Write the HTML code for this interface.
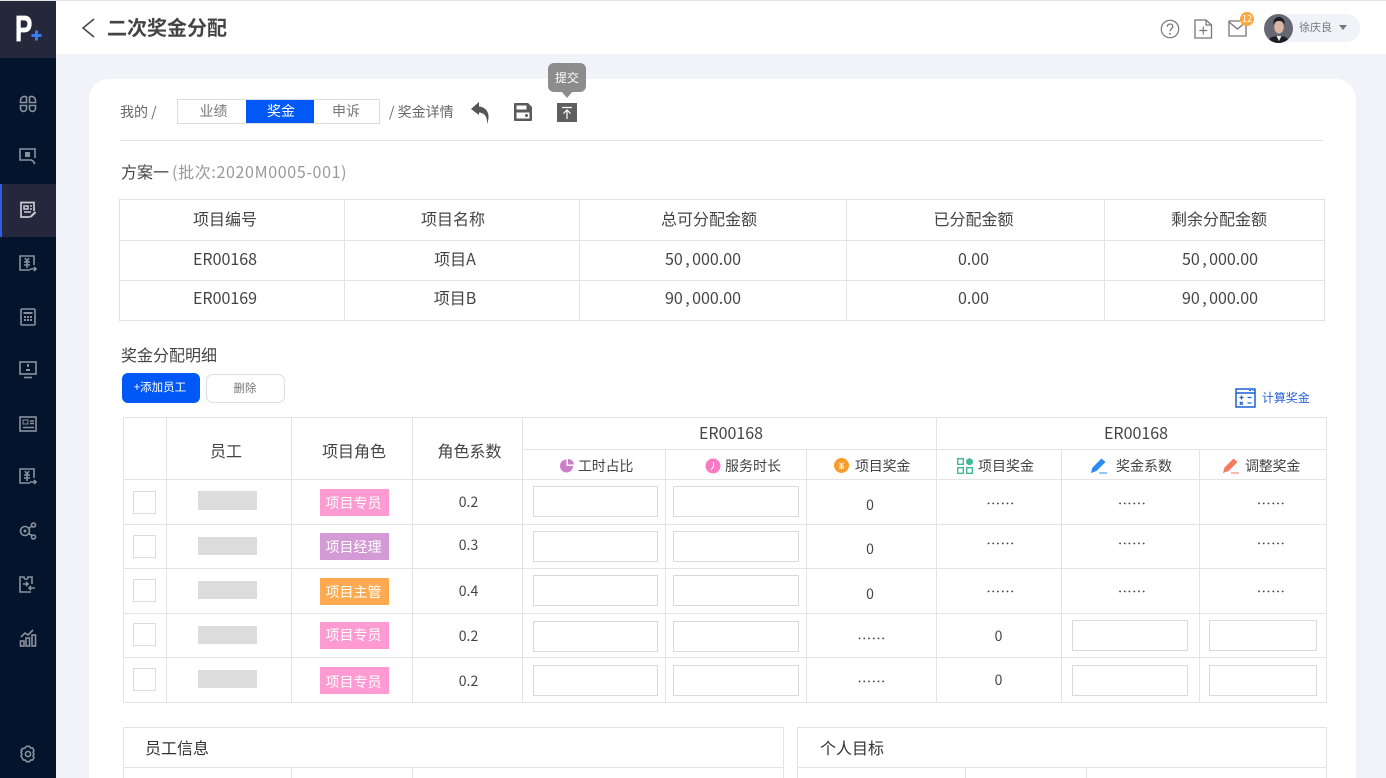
<!DOCTYPE html>
<html lang="zh"><head><meta charset="utf-8"><title>二次奖金分配</title>
<style>
html,body{margin:0;padding:0;width:1386px;height:778px;overflow:hidden;background:#f1f3f9}
body{position:relative;font-family:"Noto Sans CJK SC","Liberation Sans",sans-serif;color:#444}
div,svg,span.a{position:absolute}
.t{text-align:center;white-space:nowrap;font-size:16px;line-height:24px;color:#444}
.l{text-align:left}
.h{background:#e4e4e4;height:1px}
.v{background:#e4e4e4;width:1px}
.i{background:#fff;border:1px solid #d9d9d9;box-sizing:border-box}
.c{background:#fff;border:1px solid #dcdcdc;box-sizing:border-box;width:23px;height:23px;left:133px}
.g{background:#dcdcdc;left:198px;width:59px;height:19px}
.tag{left:320px;width:69px;height:27px;line-height:27px;font-size:14px;color:#fff;text-align:center;text-indent:-2px;overflow:hidden}
.n{stroke:#8b919c;fill:none;stroke-width:1.6}
.d{font-size:14px;letter-spacing:0;line-height:20px;color:#444}
.o{letter-spacing:.3px}
.s{font-size:14px;line-height:20px}
.k{margin:0 2.5px}
</style></head><body>

<!-- sidebar -->
<div style="left:0;top:0;width:56px;height:778px;background:#03142c"></div>
<div style="left:0;top:0;width:56px;height:58px;background:#25283a"></div>
<div style="left:0;top:184px;width:56px;height:53px;background:#25283c"></div>
<div style="left:0;top:184px;width:2px;height:53px;background:#2f5fe0"></div>
<div style="left:15px;top:9px;font:700 36px/40px 'Liberation Sans',sans-serif;color:#fff;-webkit-text-stroke:.7px #fff;transform:scaleX(.72);transform-origin:0 0">P</div>
<svg style="left:30px;top:29px" width="13" height="13" viewBox="0 0 13 13"><path d="M6.500 1.500v10M1.500 6.500h10" stroke="#3a7bf0" stroke-width="3"/></svg>

<svg style="left:19px;top:95px" width="18" height="18" viewBox="0 0 18 18"><g class="n"><path d="M1.500 7.500v-2a4 4 0 0 1 6-3.500v5.500z"/><path d="M16.500 7.500v-2a4 4 0 0 0-6-3.500v5.500z"/><path d="M1.500 10.500v3a3 3 0 0 0 6 0v-3z"/><path d="M16.500 10.500v3a3 3 0 0 1-6 0v-3z"/></g></svg>
<svg style="left:19px;top:148px" width="18" height="18" viewBox="0 0 18 18"><path class="n" d="M13 12H1V1h15v9"/><rect x="6" y="4" width="5" height="5" fill="#8b919c"/><path class="n" d="M12 12l2 1 2 3"/></svg>
<svg style="left:19px;top:201px" width="18" height="18" viewBox="0 0 18 18"><path d="M11 16H2V1.500h13V10" stroke="#c9ccd2" stroke-width="1.700" fill="none"/><path d="M5 5h4v3H5zM11 5h2M5 11h7M11 8h2" stroke="#c9ccd2" stroke-width="1.500" fill="none"/><path d="M11.500 16l5-5" stroke="#c9ccd2" stroke-width="2"/></svg>
<svg style="left:19px;top:255px" width="18" height="18" viewBox="0 0 18 18"><path class="n" d="M11 15H1V1h14v9"/><path class="n" d="M6 3l2 3 2-3M5 7h6M5 10h6M8 6v7"/><path class="n" stroke-width="2" d="M11 14h6M15 12l2 2-2 2"/></svg>
<svg style="left:20px;top:308px" width="16" height="18" viewBox="0 0 16 18"><rect class="n" x="1" y="1" width="14" height="16" rx="1"/><rect x="3.500" y="4" width="9" height="2" fill="#8b919c"/><path d="M4 9h2M7 9h2M10 9h2M4 12h2M7 12h2M10 12h2" stroke="#8b919c" stroke-width="2"/></svg>
<svg style="left:19px;top:361px" width="18" height="18" viewBox="0 0 18 18"><rect class="n" x="1" y="1" width="16" height="12"/><path d="M5 16.500h8" stroke="#8b919c" stroke-width="1.600"/><path d="M8 3h2v3H8zM7 8h4v2H7z" fill="#8b919c"/></svg>
<svg style="left:19px;top:415px" width="18" height="18" viewBox="0 0 18 18"><rect class="n" x="1" y="2" width="16" height="14"/><rect x="4" y="5" width="5" height="4" fill="none" stroke="#8b919c"/><path d="M11 6h4M11 8.500h4M4 12.500h11" stroke="#8b919c" stroke-width="1.400"/></svg>
<svg style="left:19px;top:468px" width="18" height="18" viewBox="0 0 18 18"><path class="n" d="M11 15H1V1h14v9"/><path class="n" d="M6 3l2 3 2-3M5 7h6M5 10h6M8 6v7"/><path class="n" stroke-width="2" d="M11 14h6M15 12l2 2-2 2"/></svg>
<svg style="left:19px;top:522px" width="18" height="18" viewBox="0 0 18 18"><circle class="n" cx="6" cy="9" r="4.500"/><circle cx="6" cy="9" r="1.500" fill="#8b919c"/><circle class="n" cx="14.500" cy="3" r="2"/><circle class="n" cx="14.500" cy="15" r="2"/><path class="n" d="M9.500 6.500l3.500-2.500M9.500 11.500l3.500 2"/></svg>
<svg style="left:19px;top:575px" width="18" height="18" viewBox="0 0 18 18"><path class="n" d="M12 17H1V2h4c0 3 4 3 4 0h4v7"/><path class="n" d="M4 9h5M7 7l2 2-2 2M16 13h-6M12 11l-2 2 2 2"/></svg>
<svg style="left:19px;top:629px" width="18" height="18" viewBox="0 0 18 18"><path class="n" d="M2 8l4-4 3 2 5-5"/><rect class="n" x="1.500" y="12" width="3.500" height="5"/><rect class="n" x="7" y="9" width="3.500" height="8"/><rect class="n" x="13" y="6" width="3.500" height="11"/></svg>
<svg style="left:20px;top:745px" width="16" height="18" viewBox="0 0 16 18"><path class="n" stroke-width="1.800" d="M6.500 1.300h3l1 1.700 2-.1 1.500 2.600-1 1.700 1 1.800-1 1.700 1 1.800-1.500 2.600-2-.1-1 1.700h-3l-1-1.700-2 .1L1 11.300l1-1.800-1-1.700 1-1.800-1-.6 1.500-2 2 .1z" stroke-linejoin="round"/><circle class="n" cx="8" cy="9" r="2.600"/></svg>

<!-- header -->
<div style="left:56px;top:1px;width:1330px;height:53px;background:#fff"></div>
<div style="left:0;top:0;width:1386px;height:1px;background:#e3e4e8"></div>
<svg style="left:80px;top:17px" width="18" height="22" viewBox="0 0 18 22"><path d="M14 2L3 11l11 9" stroke="#444" stroke-width="1.500" fill="none"/></svg>
<div class="t l" style="left:107px;top:12px;font-size:20px;line-height:30px;font-weight:700;color:#444">二次奖金分配</div>
<svg style="left:1160px;top:19px" width="20" height="20" viewBox="0 0 20 20"><circle cx="10" cy="10" r="8.700" fill="none" stroke="#777" stroke-width="1.200"/><path d="M7.300 7.800C7.300 6 8.500 5 10 5s2.800 1 2.800 2.500c0 2.200-2.800 2.400-2.800 4.700" fill="none" stroke="#777" stroke-width="1.300"/><circle cx="10" cy="14.800" r=".9" fill="#777"/></svg>
<svg style="left:1194px;top:19px" width="19" height="20" viewBox="0 0 19 20"><path d="M1 1h11l5.500 5v13H1z" fill="none" stroke="#777" stroke-width="1.300"/><path d="M12 1v5h5.500M9.300 7.500v8M5.300 11.500h8" fill="none" stroke="#777" stroke-width="1.200"/></svg>
<svg style="left:1228px;top:20px" width="19" height="17" viewBox="0 0 19 17"><path d="M1 1h17v15H1z" fill="none" stroke="#777" stroke-width="1.300"/><path d="M1 2l8.500 7L18 2" fill="none" stroke="#777" stroke-width="1.300"/></svg>
<div style="left:1240px;top:12px;width:14px;height:14px;border-radius:50%;background:#ffa63d;color:#fff;font-size:9px;line-height:14px;text-align:center">12</div>
<div style="left:1270px;top:14px;width:90px;height:28px;border-radius:14px;background:#f1f3f9"></div>
<svg style="left:1264px;top:14px" width="29" height="29" viewBox="0 0 29 29"><defs><clipPath id="av"><circle cx="14.500" cy="14.500" r="14.500"/></clipPath></defs><g clip-path="url(#av)"><rect width="29" height="29" fill="#666873"/><ellipse cx="15" cy="13" rx="4.800" ry="6.500" fill="#dcb5a4"/><path d="M9.500 11c-1-6 3-8 5.500-8s6.500 2 5.500 8c-1-3-2.500-4-5.500-4s-4.500 1-5.500 4z" fill="#1e1d22"/><path d="M4 29c0-6 6-7 11-7s10 1 10 7z" fill="#1d1e26"/><path d="M12.500 22h5l-2.500 5z" fill="#eee"/></g></svg>
<div class="t l" style="left:1299px;top:18px;font-size:11px;line-height:18px;color:#777">徐庆良</div>
<svg style="left:1338px;top:24px" width="10" height="7" viewBox="0 0 10 7"><path d="M1 1h8L5 6z" fill="#777"/></svg>

<!-- card -->
<div style="left:89px;top:79px;width:1267px;height:720px;border-radius:20px;background:#fff"></div>

<!-- toolbar -->
<div class="t l" style="left:120px;top:102px;font-size:14px;line-height:21px;color:#666">我的 /</div>
<div style="left:177px;top:99px;width:203px;height:25px;box-sizing:border-box;border:1px solid #ddd;background:#fff"></div>
<div style="left:246px;top:100px;width:68px;height:23px;background:#0059f7"></div>
<div class="t" style="left:179px;top:101px;width:69px;font-size:14px;line-height:21px;color:#777">业绩</div>
<div class="t" style="left:247px;top:101px;width:68px;font-size:14px;line-height:21px;color:#fff">奖金</div>
<div class="t" style="left:313px;top:101px;width:66px;font-size:14px;line-height:21px;color:#777">申诉</div>
<div class="t l" style="left:389px;top:102px;font-size:14px;line-height:21px;color:#666">/ 奖金详情</div>
<svg style="left:470px;top:100px" width="20" height="25" viewBox="0 0 20 25"><path d="M1 9L9 2v4.500c6 .5 10 5 9.500 11-.1 2-.6 4.500-1.500 6.500.5-6-1.500-11-8-11.500V15z" fill="#555"/></svg>
<svg style="left:513px;top:102px" width="20" height="20" viewBox="0 0 20 20"><path fill-rule="evenodd" d="M2 1h13l4 4v13a1 1 0 0 1-1 1H2a1 1 0 0 1-1-1V2a1 1 0 0 1 1-1zm1.500 2.500v4h10v-4zM3.500 10.500v6h13v-6zM13.500 12a1.500 1.500 0 1 1 0 3 1.500 1.500 0 0 1 0-3z" fill="#5a5a5a"/></svg>
<svg style="left:557px;top:103px" width="20" height="19" viewBox="0 0 20 19"><rect width="20" height="19" fill="#5f5f5f"/><path d="M5 4.500h10M10 16V7.500M6.500 10.500L10 7l3.500 3.500" stroke="#fff" stroke-width="1.200" fill="none"/></svg>
<div style="left:548px;top:63px;width:38px;height:29px;border-radius:6px;background:#8c8c8c"></div>
<svg style="left:561px;top:91px" width="12" height="7" viewBox="0 0 12 7"><path d="M0 0h12L6 7z" fill="#8c8c8c"/></svg>
<div class="t" style="left:548px;top:69px;width:38px;font-size:12px;line-height:18px;color:#fff">提交</div>
<div class="h" style="left:120px;top:140px;width:1203px"></div>

<div class="t l" style="left:121px;top:159px;font-size:16px;color:#444">方案一<span style="color:#999;letter-spacing:.65px;margin-left:3px">(批次:2020M0005-001)</span></div>

<!-- table 1 -->
<div style="left:119px;top:199px;width:1206px;height:122px;box-sizing:border-box;border:1px solid #e0e0e0"></div>
<div class="h" style="left:120px;top:240px;width:1204px"></div>
<div class="h" style="left:120px;top:280px;width:1204px"></div>
<div class="v" style="left:344px;top:200px;height:120px"></div>
<div class="v" style="left:579px;top:200px;height:120px"></div>
<div class="v" style="left:846px;top:200px;height:120px"></div>
<div class="v" style="left:1104px;top:200px;height:120px"></div>
<div class="t" style="left:120px;top:206px;width:210px">项目编号</div>
<div class="t" style="left:344px;top:206px;width:218px">项目名称</div>
<div class="t" style="left:579px;top:206px;width:260px">总可分配金额</div>
<div class="t" style="left:846px;top:206px;width:255px">已分配金额</div>
<div class="t" style="left:1104px;top:206px;width:230px">剩余分配金额</div>
<div class="t" style="left:120px;top:246px;width:210px">ER00168</div>
<div class="t" style="left:344px;top:246px;width:222px">项目A</div>
<div class="t" style="left:579px;top:246px;width:248px">50<span class="k">,</span>000.00</div>
<div class="t" style="left:846px;top:246px;width:255px">0.00</div>
<div class="t" style="left:1104px;top:246px;width:232px">50<span class="k">,</span>000.00</div>
<div class="t" style="left:120px;top:285px;width:210px">ER00169</div>
<div class="t" style="left:344px;top:285px;width:222px">项目B</div>
<div class="t" style="left:579px;top:285px;width:248px">90<span class="k">,</span>000.00</div>
<div class="t" style="left:846px;top:285px;width:255px">0.00</div>
<div class="t" style="left:1104px;top:285px;width:232px">90<span class="k">,</span>000.00</div>

<div class="t l" style="left:121px;top:342px;color:#444">奖金分配明细</div>
<div style="left:122px;top:373px;width:78px;height:30px;border-radius:6px;background:#0059f7;color:#fff;font-size:11.500px;line-height:29px;text-align:center;text-indent:-2px">+添加员工</div>
<div style="left:206px;top:374px;width:79px;height:29px;box-sizing:border-box;border:1px solid #ddd;border-radius:7px;background:#fff;color:#777;font-size:11.500px;line-height:26px;text-align:center;text-indent:-1px">删除</div>
<svg style="left:1235px;top:388px" width="21" height="20" viewBox="0 0 21 20"><rect x="1" y="1" width="19" height="18" fill="none" stroke="#1d5fd6" stroke-width="1.500"/><path d="M1 5h19" stroke="#1d5fd6" stroke-width="1.500"/><path d="M14 2.500h2M17.500 2.500h1" stroke="#1d5fd6"/><path d="M4.500 9.500h4M6.500 7.500v4M12.500 9.500h4M4.800 13.800l3 3M7.800 13.800l-3 3M12.500 15h4" stroke="#1d5fd6" stroke-width="1.300"/></svg>
<div class="t l" style="left:1262px;top:389px;font-size:12px;line-height:18px;color:#2a63d6;letter-spacing:-.1px">计算奖金</div>

<!-- table 2 -->
<div style="left:123px;top:417px;width:1204px;height:286px;box-sizing:border-box;border:1px solid #e4e4e4"></div>
<div class="h" style="left:522px;top:449px;width:805px"></div>
<div class="h" style="left:123px;top:479px;width:1204px"></div>
<div class="h" style="left:123px;top:524px;width:1204px"></div>
<div class="h" style="left:123px;top:568px;width:1204px"></div>
<div class="h" style="left:123px;top:613px;width:1204px"></div>
<div class="h" style="left:123px;top:657px;width:1204px"></div>
<div class="v" style="left:166px;top:417px;height:285px"></div>
<div class="v" style="left:291px;top:417px;height:285px"></div>
<div class="v" style="left:412px;top:417px;height:285px"></div>
<div class="v" style="left:522px;top:417px;height:285px"></div>
<div class="v" style="left:665px;top:449px;height:253px"></div>
<div class="v" style="left:806px;top:449px;height:253px"></div>
<div class="v" style="left:936px;top:417px;height:285px"></div>
<div class="v" style="left:1061px;top:449px;height:253px"></div>
<div class="v" style="left:1199px;top:449px;height:253px"></div>

<div class="t" style="left:167px;top:438px;width:118px">员工</div>
<div class="t" style="left:291px;top:438px;width:126px">项目角色</div>
<div class="t" style="left:412px;top:438px;width:115px">角色系数</div>
<div class="t" style="left:522px;top:420px;width:418px">ER00168</div>
<div class="t" style="left:936px;top:420px;width:400px">ER00168</div>

<svg style="left:560px;top:459px" width="14" height="14" viewBox="0 0 14 14"><path d="M6.500.5v6.500h6.500A6.500 6.500 0 1 1 6.500.5z" fill="#cc7fc9"/><path d="M8 0a6 6 0 0 1 6 5.500H8z" fill="#cc7fc9"/></svg>
<div class="t l s" style="left:578px;top:456px;letter-spacing:-.2px">工时占比</div>
<svg style="left:705px;top:458px" width="16" height="16" viewBox="0 0 16 16"><circle cx="8" cy="8" r="7.500" fill="#f77cc5"/><path d="M8.500 4v4.500L6 12" stroke="#fff" fill="none"/></svg>
<div class="t l s" style="left:725px;top:456px">服务时长</div>
<svg style="left:834px;top:458px" width="15" height="15" viewBox="0 0 15 15"><circle cx="7.500" cy="7.500" r="7.500" fill="#f99c2c"/><path d="M5.500 4.500l2 2.500 2-2.500M5 8h5M5 10h5M7.500 7v4" stroke="#fff" fill="none"/></svg>
<div class="t l s" style="left:855px;top:456px;letter-spacing:-.2px">项目奖金</div>
<svg style="left:957px;top:458px" width="16" height="16" viewBox="0 0 16 16"><g fill="none" stroke="#3fba93" stroke-width="1.400"><rect x=".7" y=".7" width="5.600" height="5.600"/><rect x=".7" y="9.700" width="5.600" height="5.600"/><rect x="9.700" y="9.700" width="5.600" height="5.600"/></g><path d="M12.500 0l3.300 1.900v3.700L12.500 7.500 9.200 5.600V1.900z" fill="#3fba93"/></svg>
<div class="t l s" style="left:978px;top:456px">项目奖金</div>
<svg style="left:1091px;top:457px" width="17" height="17" viewBox="0 0 17 17"><path d="M0 16l1.500-5.500L10.500 1.500l4 3.500-9 9z" fill="#2a8cf0"/><path d="M8 16h8" stroke="#2a8cf0" stroke-width="1"/></svg>
<div class="t l s" style="left:1116px;top:456px">奖金系数</div>
<svg style="left:1223px;top:457px" width="17" height="17" viewBox="0 0 17 17"><path d="M0 16l1.500-5.500L10.500 1.500l4 3.500-9 9z" fill="#f57a5e"/><path d="M8 16h8" stroke="#f57a5e" stroke-width="1"/></svg>
<div class="t l s" style="left:1245px;top:456px;letter-spacing:-.2px">调整奖金</div>

<!-- rows -->
<div class="c" style="top:491px"></div><div class="c" style="top:535px"></div><div class="c" style="top:579px"></div><div class="c" style="top:623px"></div><div class="c" style="top:668px"></div>
<div class="g" style="top:491px"></div><div class="g" style="top:537px;height:18px"></div><div class="g" style="top:581px;height:18px"></div><div class="g" style="top:626px;height:18px"></div><div class="g" style="top:670px;height:18px"></div>
<div class="tag" style="top:489px;background:#ff9bd2;line-height:29px">项目专员</div>
<div class="tag" style="top:533px;background:#d39ad6;line-height:29px">项目经理</div>
<div class="tag" style="top:578px;background:#ffaa50;line-height:29px">项目主管</div>
<div class="tag" style="top:622px;background:#ff9bd2">项目专员</div>
<div class="tag" style="top:667px;background:#ff9bd2;line-height:31px">项目专员</div>
<div class="t d" style="left:412px;top:492px;width:113px">0.2</div>
<div class="t d" style="left:412px;top:535px;width:113px">0.3</div>
<div class="t d" style="left:412px;top:581px;width:113px">0.4</div>
<div class="t d" style="left:412px;top:626px;width:113px">0.2</div>
<div class="t d" style="left:412px;top:671px;width:113px">0.2</div>

<div class="i" style="left:533px;top:486px;width:125px;height:31px"></div><div class="i" style="left:673px;top:486px;width:126px;height:31px"></div>
<div class="i" style="left:533px;top:531px;width:125px;height:31px"></div><div class="i" style="left:673px;top:531px;width:126px;height:31px"></div>
<div class="i" style="left:533px;top:575px;width:125px;height:31px"></div><div class="i" style="left:673px;top:575px;width:126px;height:31px"></div>
<div class="i" style="left:533px;top:621px;width:125px;height:31px"></div><div class="i" style="left:673px;top:621px;width:126px;height:31px"></div>
<div class="i" style="left:533px;top:665px;width:125px;height:31px"></div><div class="i" style="left:673px;top:665px;width:126px;height:31px"></div>
<div class="i" style="left:1072px;top:620px;width:116px;height:31px"></div><div class="i" style="left:1209px;top:620px;width:108px;height:31px"></div>
<div class="i" style="left:1072px;top:665px;width:116px;height:31px"></div><div class="i" style="left:1209px;top:665px;width:108px;height:31px"></div>

<div class="t d" style="left:806px;top:495px;width:128px">0</div>
<div class="t d" style="left:806px;top:539px;width:128px">0</div>
<div class="t d" style="left:806px;top:584px;width:128px">0</div>
<div class="t d o" style="left:806px;top:629px;width:131px">……</div>
<div class="t d o" style="left:806px;top:672px;width:131px">……</div>
<div class="t d" style="left:936px;top:626px;width:125px">0</div>
<div class="t d" style="left:936px;top:670px;width:125px">0</div>
<div class="t d o" style="left:936px;top:494px;width:129px">……</div>
<div class="t d o" style="left:1062px;top:494px;width:140px">……</div>
<div class="t d o" style="left:1199px;top:494px;width:144px">……</div>
<div class="t d o" style="left:936px;top:534px;width:129px">……</div>
<div class="t d o" style="left:1062px;top:534px;width:140px">……</div>
<div class="t d o" style="left:1199px;top:534px;width:144px">……</div>
<div class="t d o" style="left:936px;top:582px;width:129px">……</div>
<div class="t d o" style="left:1062px;top:582px;width:140px">……</div>
<div class="t d o" style="left:1199px;top:582px;width:144px">……</div>

<!-- bottom panels -->
<div style="left:123px;top:727px;width:661px;height:60px;box-sizing:border-box;border:1px solid #e4e4e4"></div>
<div class="h" style="left:123px;top:767px;width:660px"></div>
<div class="v" style="left:291px;top:767px;height:11px"></div>
<div class="v" style="left:412px;top:767px;height:11px"></div>
<div class="t l" style="left:145px;top:735px;color:#333">员工信息</div>
<div style="left:797px;top:727px;width:530px;height:60px;box-sizing:border-box;border:1px solid #e4e4e4"></div>
<div class="h" style="left:797px;top:767px;width:530px"></div>
<div class="v" style="left:965px;top:767px;height:11px"></div>
<div class="v" style="left:1086px;top:767px;height:11px"></div>
<div class="t l" style="left:820px;top:735px;color:#333">个人目标</div>
</body></html>
